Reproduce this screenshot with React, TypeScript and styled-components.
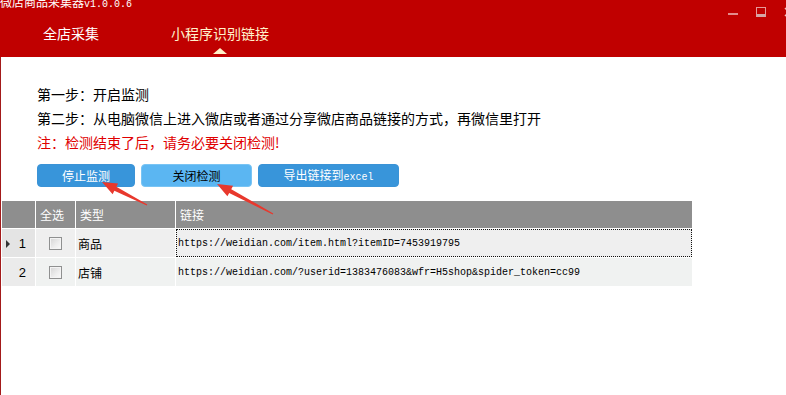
import React from 'react';
import styled, { createGlobalStyle } from 'styled-components';

interface LinkRow {
  id: number,
  type: string,
  url: string,
  focused?: boolean,
};

const ROWS: LinkRow[] = [
  { id: 1, type: '商品', url: 'https://weidian.com/item.html?itemID=7453919795', focused: true },
  { id: 2, type: '店铺', url: 'https://weidian.com/?userid=1383476083&wfr=H5shop&spider_token=cc99' },
];

// arrow drawn from tail to tip, points worked out when rendering
const arrowPoints = (tx: number, ty: number, sx: number, sy: number) => {
  const dx = tx - sx;
  const dy = ty - sy;
  const len = Math.hypot(dx, dy);
  const ux = dx / len, uy = dy / len;
  const nx = -uy, ny = ux;
  const headLen = 15, headW = 6, neckW = 2.2, tailW = 0.6;
  const bx = tx - ux * headLen, by = ty - uy * headLen;
  const pts = [
    [tx, ty],
    [bx + nx * headW, by + ny * headW],
    [bx + nx * neckW, by + ny * neckW],
    [sx + nx * tailW, sy + ny * tailW],
    [sx - nx * tailW, sy - ny * tailW],
    [bx - nx * neckW, by - ny * neckW],
    [bx - nx * headW, by - ny * headW],
  ];
  return pts.map(p => p.join(',')).join(' ');
};

const App: React.FC = () => {
  return (
    <Root>
      <GlobalStyle />
      <TitleBar>
        <TopRow>
          <Caption>微店商品采集器<Mono>v1.0.0.6</Mono></Caption>
          <Controls>
            <MinBtn />
            <MaxBtn />
            <CloseBtn viewBox='0 0 10 10'>
              <path d='M1 1 L9 9 M9 1 L1 9' stroke='rgba(255,255,255,0.75)' strokeWidth='1.5' />
            </CloseBtn>
          </Controls>
        </TopRow>
        <Tabs>
          <Tab>
            <TabLabel>全店采集</TabLabel>
          </Tab>
          <Tab $active>
            <TabLabel $active>小程序识别链接</TabLabel>
            <Caret />
          </Tab>
        </Tabs>
      </TitleBar>
      <Body>
        <Steps>
          <p>第一步：开启监测</p>
          <p>第二步：从电脑微信上进入微店或者通过分享微店商品链接的方式，再微信里打开</p>
          <Warn>注：检测结束了后，请务必要关闭检测!</Warn>
        </Steps>
        <Buttons>
          <Button $w={98}><span>停止监测</span></Button>
          <Button $w={111} $hover><span>关闭检测</span></Button>
          <Button $w={141}><span>导出链接到<Mono>excel</Mono></span></Button>
        </Buttons>
        <Grid>
          <HeadCell />
          <HeadCell>全选</HeadCell>
          <HeadCell>类型</HeadCell>
          <HeadCell>链接</HeadCell>
          {ROWS.map((row, index) => (
            <React.Fragment key={row.id}>
              <RowHead $current={index === 0}>
                {index === 0 && <Pointer />}
                {row.id}
              </RowHead>
              <Cell $alt={index % 2 === 1} $center>
                <Check />
              </Cell>
              <Cell $alt={index % 2 === 1}>{row.type}</Cell>
              <LinkCell $alt={index % 2 === 1} $focused={row.focused}>{row.url}</LinkCell>
            </React.Fragment>
          ))}
        </Grid>
      </Body>
      <Marks width='786' height='395'>
        <polygon points={arrowPoints(102, 182, 147, 205)} fill='#e8382d' />
        <polygon points={arrowPoints(217, 184, 273, 214)} fill='#e8382d' />
      </Marks>
    </Root>
  )
}

export default App;

const GlobalStyle = createGlobalStyle`
  html, body {
    margin: 0;
    padding: 0;
    background: #fff;
  }
`;

const Root = styled.div`
  position: relative;
  width: 786px;
  height: 395px;
  overflow: hidden;
  background: #fff;
  font-family: "Noto Sans CJK SC", "Liberation Sans", sans-serif;
  display: flex;
  flex-direction: column;
`;

const Mono = styled.span`
  font-family: "Liberation Mono", monospace;
  font-size: 10px;
`;

const TitleBar = styled.div`
  height: 57px;
  flex: none;
  background: #c00000;
  display: flex;
  flex-direction: column;
`;

const TopRow = styled.div`
  height: 17px;
  display: flex;
  justify-content: space-between;
  align-items: flex-start;
`;

const Caption = styled.div`
  margin-top: -4px;
  font-size: 12px;
  line-height: 12px;
  color: #fff;
  white-space: nowrap;
`;

const Controls = styled.div`
  display: flex;
  align-items: flex-start;
  gap: 18px;
  margin-top: 7px;
  margin-right: -8px;
`;

const MinBtn = styled.div`
  width: 10px;
  height: 2px;
  margin-top: 6px;
  background: rgba(255, 255, 255, 0.55);
`;

const MaxBtn = styled.div`
  box-sizing: border-box;
  width: 10px;
  height: 10px;
  border: 1px solid rgba(255, 255, 255, 0.6);
  border-bottom: 3px solid rgba(220, 220, 220, 0.75);
`;

const CloseBtn = styled.svg`
  width: 10px;
  height: 10px;
`;

const Tabs = styled.div`
  display: flex;
  gap: 7px;
  height: 40px;
`;

const Tab = styled.div<{ $active?: boolean }>`
  width: 142px;
  display: flex;
  flex-direction: column;
  align-items: center;
`;

const TabLabel = styled.div<{ $active?: boolean }>`
  height: 31px;
  line-height: 31px;
  padding-top: 1px;
  box-sizing: border-box;
  font-size: 14px;
  color: ${p => p.$active ? '#fff2cc' : '#fff'};
`;

const Caret = styled.div`
  width: 0;
  height: 0;
  border-left: 7px solid transparent;
  border-right: 7px solid transparent;
  border-bottom: 6px solid #fff0c8;
`;

const Body = styled.div`
  flex: 1;
  border-left: 1px solid #a31a1a;
`;

const Steps = styled.div`
  padding: 25px 0 0 36px;
  font-size: 14px;
  line-height: 24px;
  color: #000;
  p {
    margin: 0;
    white-space: nowrap;
  }
`;

const Warn = styled.p`
  color: #e00000;
`;

const Buttons = styled.div`
  display: flex;
  gap: 6px;
  padding-left: 36px;
  margin-top: 10px;
`;

const Button = styled.div<{ $w: number, $hover?: boolean }>`
  box-sizing: border-box;
  width: ${p => p.$w}px;
  height: 23px;
  border-radius: 4px;
  display: flex;
  align-items: center;
  justify-content: center;
  font-size: 12px;
  line-height: 21px;
  white-space: nowrap;
  background: ${p => p.$hover ? '#5bb6f2' : '#3895da'};
  border: 1px solid ${p => p.$hover ? '#79c4f4' : '#3b93d6'};
  color: ${p => p.$hover ? '#000' : '#fff'};
  ${Mono} {
    font-size: 10px;
  }
`;

const Grid = styled.div`
  display: grid;
  grid-template-columns: 33px 39px 99px 516px;
  grid-template-rows: 27px 28px 28px;
  gap: 1px;
  width: 690px;
  margin: 14px 0 0 1px;
  background: #fff;
  font-size: 12px;
`;

const HeadCell = styled.div`
  background: #8e8e8e;
  color: #fff;
  padding-left: 4px;
  display: flex;
  align-items: center;
`;

const RowHead = styled.div<{ $current?: boolean }>`
  position: relative;
  background: ${p => p.$current ? '#e4e4e4' : '#ebebeb'};
  display: flex;
  align-items: center;
  justify-content: flex-end;
  padding-right: 9px;
  font-family: "Liberation Sans", sans-serif;
  font-size: 13px;
  color: #000;
`;

const Pointer = styled.span`
  position: absolute;
  left: 4px;
  top: 11px;
  width: 0;
  height: 0;
  border-top: 4px solid transparent;
  border-bottom: 4px solid transparent;
  border-left: 4px solid #333;
`;

const Cell = styled.div<{ $alt?: boolean, $center?: boolean }>`
  box-sizing: border-box;
  background: ${p => p.$alt ? '#f0f2f1' : '#efefef'};
  display: flex;
  align-items: center;
  justify-content: ${p => p.$center ? 'center' : 'flex-start'};
  padding-left: ${p => p.$center ? '0' : '2px'};
  color: #000;
  white-space: nowrap;
`;

const LinkCell = styled(Cell)<{ $focused?: boolean }>`
  font-family: "Liberation Mono", monospace;
  font-size: 10px;
  padding-left: ${p => p.$focused ? '1px' : '2px'};
  border: ${p => p.$focused ? '1px dotted #111' : 'none'};
`;

const Check = styled.span`
  box-sizing: border-box;
  width: 13px;
  height: 13px;
  border: 1px solid #8f9090;
  background: linear-gradient(135deg, #d4d4d4 0%, #eeeeee 60%, #fafafa 100%);
  box-shadow: inset 0 0 0 1px #f4f4f4;
`;

const Marks = styled.svg`
  position: absolute;
  left: 0;
  top: 0;
  pointer-events: none;
`;
